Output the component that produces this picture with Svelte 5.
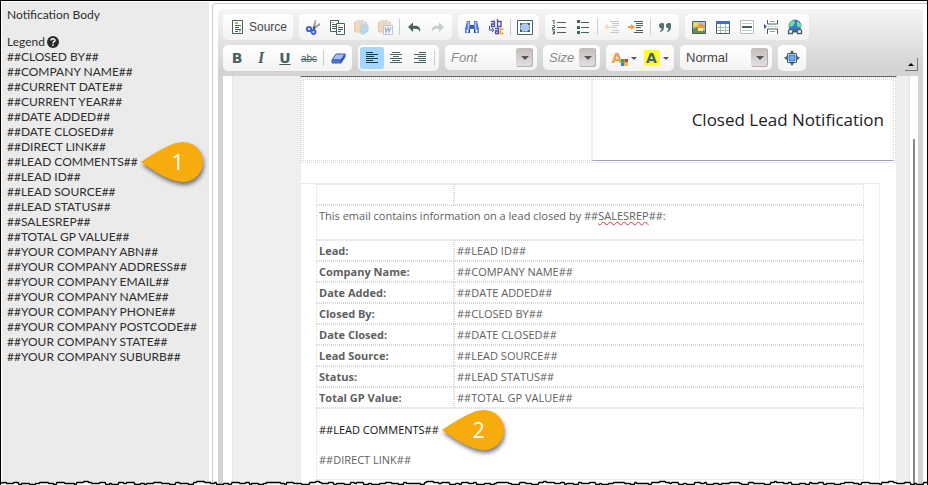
<script>
  const ink = '#466260';

  const icons = {
    source: `<path d="M3.5 1.5h10v13h-10z" fill="#fff" stroke="${ink}"/><path d="M6 4h3" stroke="#e9a13b" stroke-width="2"/><path d="M6 6.5h6M6 8.5h4M6 10.5h6M6 12.5h3" stroke="${ink}"/><path d="M10 14v-3h3z" fill="#a9b8b6"/>`,
    cut: `<path d="M10 1L8 8l2 2 1-9zM15 4L9 8l-1 3 7-5z" fill="#8c9494"/><path d="M8 8l2 2" stroke="#444c70" stroke-width="2"/><circle cx="4" cy="10" r="2.2" fill="#cfdcff" stroke="#3d63c4" stroke-width="1.8"/><circle cx="8.5" cy="13" r="2" fill="#cfdcff" stroke="#3d63c4" stroke-width="1.8"/>`,
    copy: `<path d="M1.500 1.500h8v11h-8z" fill="#fff" stroke="${ink}"/><path d="M3 3.500h2" stroke="#e9a13b"/><path d="M3 5.500h4M3 7.500h4M3 9.500h4" stroke="${ink}"/><path d="M7.500 4.500h8v11h-8z" fill="#fff" stroke="${ink}"/><path d="M9 6.500h2" stroke="#e9a13b"/><path d="M9 8.500h5M9 10.500h5M9 12.500h3" stroke="${ink}"/>`,
    paste: `<g opacity=".42"><path d="M1.500 3h12v10h-12z" fill="#eeaa5c" stroke="#c98b49"/><path d="M4 1h7v4H4z" fill="#b7b0a6"/><path d="M8 6h7v6l-4 3H8z" fill="#6ca9d7" stroke="#5896c4"/></g>`,
    word: `<g opacity=".42"><path d="M1.500 3h12v10h-12z" fill="#eeaa5c" stroke="#c98b49"/><path d="M4 1h7v4H4z" fill="#b7b0a6"/><path d="M6.500 6.500h9v9h-9z" fill="#fff" stroke="#657fb8"/><path d="M8 8l1 5 2-4 1 4 2-5" fill="none" stroke="#405fa4" stroke-width="1.500"/></g>`,
    undo: `<path d="M2 8l5-4.500V7c5-1 8 1 7 6-1-3-3-4-7-3v3z" fill="${ink}"/>`,
    redo: `<path d="M14 8L9 3.500V7C4 6 1 8 2 13c1-3 3-4 7-3v3z" fill="#c3cecc"/>`,
    find: `<path d="M3 2h3v4h4V2h3l2 8v4h-5v-4H6v4H1v-4z" fill="#4b79ce"/><path d="M2.500 10.500h2v3h-2zM11.500 10.500h2v3h-2z" fill="#e8efff"/><path d="M4.500 3v7M11.500 3v7" stroke="#a9c8ff" stroke-width="1.500"/><path d="M7 6v4M9 6v4M5.500 10v4M10.500 10v4" stroke="#323c88"/>`,
    replace: `<path d="M3 2.500h3.500v5H3.500V5h3M9.500 0v7.500h3.500v-5H9.500M7 9.500h3.500v5H7.500V12h3" fill="none" stroke="#4d4aa8" stroke-width="1.300"/><path d="M15.500 10h-3v4.500h3" fill="none" stroke="#ee9f3f" stroke-width="1.500"/><path d="M1.500 7v4h4M4 9l2 2-2 2" fill="none" stroke="#4d4aa8"/>`,
    selectall: `<path d="M.5 1.500h15v14H.5z" fill="#fff" stroke="${ink}"/><path d="M3.500 4.500h9v8h-9z" fill="#a9c7f8" stroke="#537188" stroke-dasharray="2 1"/><path d="M3 4h2v2H3zM11 4h2v2h-2zM3 11h2v2H3zM11 11h2v2h-2z" fill="${ink}"/>`,
    numbers: `<path d="M1.500 2L3 1v4M1.500 6.500h2v2h-2v2h2.500M1.500 12h2v3h-2M2 13.500h1" fill="none" stroke="${ink}"/><path d="M6 3.500h9M6 8.500h9M6 13.500h9" stroke="${ink}"/>`,
    bullets: `<path d="M2 1h3v3H2zM2 7h3v3H2zM2 12h3v3H2z" fill="${ink}"/><path d="M6 3.500h8M6 8.500h8M6 13.500h8" stroke="${ink}"/>`,
    outdent: `<g opacity=".3"><path d="M6 2.500h9M8 4.500h7M8 6.500h7M8 8.500h5M8 11.500h7M6 13.500h9" stroke="${ink}"/><path d="M0 8l4-3v2h3v2H4v2z" fill="#ee9f3f"/></g>`,
    indent: `<path d="M6 2.500h9M8 4.500h7M8 6.500h7M8 8.500h5M8 11.500h7M6 13.500h9" stroke="${ink}"/><path d="M7 8L3 5v2H0v2h3v2z" fill="#ee9f3f"/>`,
    quote: `<path d="M7 5v3c0 3-1 4-4 5v-1c1-.6 1.500-1 1.500-2.500C2.500 9 2 8 2 6.500S3 4 4.500 4 7 4 7 5zM14 5v3c0 3-1 4-4 5v-1c1-.6 1.500-1 1.500-2.500C9.500 9 9 8 9 6.500S10 4 11.500 4 14 4 14 5z" fill="#55716e"/>`,
    image: `<path d="M1.500 2.500h13v12h-13z" fill="#9ad2ee" stroke="${ink}"/><path d="M2 10l4-3 8 5v2H2z" fill="#66924a"/><circle cx="5" cy="5.500" r="2.500" fill="#f5d94c"/><path d="M6 7l4-3 4 3v2H6z" fill="#ef9739"/><path d="M7 9h5v3H7z" fill="#ffe1a5"/>`,
    table: `<path d="M1.500 2.500h13v12h-13z" fill="#fff" stroke="${ink}"/><path d="M1 2h14v3H1z" fill="#3d70c9"/><path d="M5.500 5v9M10.500 5v9M2 8.500h12M2 11.500h12" stroke="#abb8b8"/>`,
    rule: `<path d="M1.500 1.500h13v13h-13z" fill="#fff" stroke="#b9bfbe"/><path d="M3 4.500h10M3 11.500h10" stroke="#c5cac9"/><path d="M3 8h10" stroke="${ink}" stroke-width="2"/>`,
    pagebreak: `<path d="M4.500 1v4h10V1M4.500 15v-5h10v5" fill="#fff" stroke="${ink}"/><path d="M7 2.500h5M7 12.500h5" stroke="#8e9d9c"/><path d="M1 5v5l3-2.500z" fill="#4446a4"/><path d="M5 7.500h10" stroke="#b9c3c1" stroke-dasharray="2 1"/>`,
    link: `<circle cx="8" cy="7" r="6.500" fill="#3c77db"/><path d="M3 3l4-2 1 3-2 3-4 1zM10 2l4 3v4l-4-2z" fill="#6fe18b"/><path d="M1.500 14.500v-3l1-1h3l1 1h3l1-1h3l1 1v3h-4v-2h-5v2z" fill="#fff" stroke="${ink}" stroke-width="1.300"/>`,
    eraser: `<path d="M6 4h9l-4 6H2z" fill="#9dc2ff" stroke="#3d5bb0"/><path d="M2 10h9v3H2z" fill="#4b78d8" stroke="#3d5bb0"/><path d="M11 10l4-6v3l-4 6z" fill="#355ec1" stroke="#3d5bb0"/>`,
    left: `<path d="M2 2.500h7M2 4.500h12M2 6.500h8M2 8.500h12M2 10.500h7M2 12.500h12" stroke="#193940"/>`,
    center: `<path d="M4 2.500h8M2 4.500h12M5 6.500h6M2 8.500h12M4 10.500h8M2 12.500h12" stroke="${ink}"/>`,
    right: `<path d="M7 2.500h7M2 4.500h12M6 6.500h8M2 8.500h12M7 10.500h7M2 12.500h12" stroke="${ink}"/>`,
    maximize: `<path d="M3.500 3.500h9v9h-9z" fill="#fff" stroke="${ink}"/><path d="M5 5h6v6H5z" fill="#73a9f4" stroke="#3f73c9"/><path d="M8 0l2 3H6zM8 16l2-3H6zM0 8l3-2v4zM16 8l-3-2v4z" fill="${ink}"/>`
  };

  const topGroups = [
    [['cut', 'Cut'], ['copy', 'Copy'], ['paste', 'Paste'], ['word', 'Paste from Word'], null, ['undo', 'Undo'], ['redo', 'Redo']],
    [['find', 'Find'], ['replace', 'Replace'], null, ['selectall', 'Select all']],
    [['numbers', 'Numbered list'], ['bullets', 'Bulleted list'], null, ['outdent', 'Decrease indent'], ['indent', 'Increase indent'], null, ['quote', 'Block quote']],
    [['image', 'Image'], ['table', 'Table'], ['rule', 'Horizontal line'], ['pagebreak', 'Page break'], ['link', 'Link']]
  ];

  const tokens = [
    'CLOSED BY', 'COMPANY NAME', 'CURRENT DATE', 'CURRENT YEAR', 'DATE ADDED', 'DATE CLOSED', 'DIRECT LINK',
    'LEAD COMMENTS', 'LEAD ID', 'LEAD SOURCE', 'LEAD STATUS', 'SALESREP', 'TOTAL GP VALUE', 'YOUR COMPANY ABN',
    'YOUR COMPANY ADDRESS', 'YOUR COMPANY EMAIL', 'YOUR COMPANY NAME', 'YOUR COMPANY PHONE',
    'YOUR COMPANY POSTCODE', 'YOUR COMPANY STATE', 'YOUR COMPANY SUBURB'
  ];

  const fields = [
    ['Lead:', 'LEAD ID'], ['Company Name:', 'COMPANY NAME'], ['Date Added:', 'DATE ADDED'], ['Closed By:', 'CLOSED BY'],
    ['Date Closed:', 'DATE CLOSED'], ['Lead Source:', 'LEAD SOURCE'], ['Status:', 'LEAD STATUS'], ['Total GP Value:', 'TOTAL GP VALUE']
  ];

  // Ragged paper edge: short steps up and down around a base line.
  const steps = [0, 1, 0, 2, 1, 2, 1, 0, 0, 1, 2, 0, 1, 1, 2, 0, -1, 0, 1, 0, 2, 1, 2];
  let edge = 'M0 3';
  for (let x = 4, i = 0; x < 2400; i++) {
    edge += `L${x} ${2.5 + steps[i % steps.length]}`;
    x += 2 + ((i * 5) % 7);
    edge += `L${x - 1} ${2.5 + steps[i % steps.length]}`;
  }
</script>

{#snippet icon(name)}
  <svg class="icon" viewBox="0 0 16 16" aria-hidden="true">{@html icons[name]}</svg>
{/snippet}

{#snippet callout(number)}
  <span class="callout">
    <svg viewBox="0 0 64 44" aria-hidden="true">
      <path d="M0 20C14 11 30 0 42 0a20 20 0 0 1 0 40C30 40 14 30 0 20z" fill="#f8ab0c" />
    </svg>
    <b>{number}</b>
  </span>
{/snippet}

{#snippet combo(label, value, kind)}
  <label class="combo {kind}">
    <select aria-label={label}><option>{value}</option></select>
    <span class="drop"><i class="caret"></i></span>
  </label>
{/snippet}

<div class="page">
  <aside>
    <p>Notification Body</p>
    <h2>Legend <svg class="help" viewBox="0 0 12 12" aria-hidden="true"><circle cx="6" cy="6" r="6" fill="#2b2b2b" /><path d="M4 4.600C4 2.300 8 2.300 8 4.500 8 5.800 6 5.700 6 7.200" fill="none" stroke="#fff" stroke-width="1.500" /><path d="M5.200 8.300h1.600v1.500H5.200z" fill="#fff" /></svg></h2>
    <ul>
      {#each tokens as token}
        <li><span class="anchor">##{token}##{#if token === 'LEAD COMMENTS'}{@render callout(1)}{/if}</span></li>
      {/each}
    </ul>
  </aside>

  <main>
    <div class="editor">
      <div class="toolbar">
        <div class="rows">
          <div class="row">
            <div class="group"><button class="source">{@render icon('source')}Source</button></div>
            {#each topGroups as group}
              <div class="group">
                {#each group as item}
                  {#if item}
                    <button aria-label={item[1]}>{@render icon(item[0])}</button>
                  {:else}
                    <span class="sep"></span>
                  {/if}
                {/each}
              </div>
            {/each}
          </div>
          <div class="row">
            <div class="group">
              <button class="letter bold">B</button>
              <button class="letter italic">I</button>
              <button class="letter under">U</button>
              <button class="strike">abc</button>
              <span class="sep"></span>
              <button aria-label="Remove format">{@render icon('eraser')}</button>
            </div>
            <div class="group">
              <button class="on" aria-label="Align left">{@render icon('left')}</button>
              <button aria-label="Center">{@render icon('center')}</button>
              <button aria-label="Align right">{@render icon('right')}</button>
              <span class="sep"></span>
            </div>
            {@render combo('Font family', 'Font', 'hint')}
            {@render combo('Font size', 'Size', 'hint small')}
            <div class="group">
              <button class="color" aria-label="Text color"><span class="fore">A<svg class="dots" viewBox="0 0 6 6" aria-hidden="true"><path d="M0 0h3v3H0z" fill="#2fae3c" /><path d="M3 0h3v3H3z" fill="#e43b2f" /><path d="M0 3h3v3H0z" fill="#3c79ed" /><path d="M3 3h3v3H3z" fill="#f2c52b" /></svg></span><i class="caret"></i></button>
              <button class="color" aria-label="Background color"><span class="back">A</span><i class="caret"></i></button>
            </div>
            {@render combo('Paragraph format', 'Normal', '')}
            <div class="group"><button aria-label="Maximize">{@render icon('maximize')}</button></div>
          </div>
        </div>
        <button class="collapse" aria-label="Collapse toolbar"></button>
      </div>

      <div class="canvas">
        <div class="backdrop">
          <div class="sheet">
            <div class="banner">
              <div class="logo"></div>
              <h1>Closed Lead Notification</h1>
            </div>
            <div class="frame">
              <table>
                <tbody>
                  <tr><td class="name"></td><td></td></tr>
                  <tr><td class="intro" colspan="2">This email contains information on a lead closed by ##<u>SALESREP</u>##:</td></tr>
                  {#each fields as [name, token]}
                    <tr><th scope="row">{name}</th><td>##{token}##</td></tr>
                  {/each}
                  <tr>
                    <td class="closing" colspan="2">
                      <p class="dark"><span class="anchor">##LEAD COMMENTS##{@render callout(2)}</span></p>
                      <p>##DIRECT LINK##</p>
                    </td>
                  </tr>
                </tbody>
              </table>
            </div>
          </div>
        </div>
        <div class="thumb"></div>
      </div>
    </div>
  </main>

  <svg class="torn" aria-hidden="true">
    <path d="{edge}V8H0z" fill="#fff" />
    <path d={edge} fill="none" stroke="#000" stroke-width="1.500" />
  </svg>
</div>

<style>
  :global(body) { margin: 0; background: #fff; }
  * { box-sizing: border-box; }
  p, h1, h2, ul { margin: 0; padding: 0; font-weight: normal; }

  .page {
    position: relative;
    display: flex;
    min-height: 100vh;
    padding: 1px 0 0 1px;
    border: 1px solid #000;
    border-bottom: 0;
    overflow: hidden;
    font-family: "Liberation Sans", sans-serif;
  }

  aside {
    flex: none;
    width: 207px;
    padding: 5px;
    background: #ebebeb;
    color: #2e2e2e;
    font: 12px/15px Lato, sans-serif;
  }
  aside h2 { display: flex; align-items: center; gap: 2px; margin-top: 12px; font-size: 12px; }
  .help { width: 12px; height: 12px; }
  ul { list-style: none; }
  .anchor { position: relative; white-space: nowrap; }

  main {
    flex: 1;
    min-width: 0;
    margin: 1px 0 0 3px;
    padding: 5px 4px 0 5px;
    border: solid #ccc;
    border-width: 1px 0 0 1px;
    border-radius: 4px 0 0 0;
  }
  .editor { display: flex; flex-direction: column; height: 100%; background: #d3d3d3; border-radius: 5px 5px 0 0; }

  .toolbar {
    display: flex;
    justify-content: space-between;
    align-items: flex-end;
    padding: 5px;
    border-radius: 5px 5px 0 0;
    background: linear-gradient(#f5f5f5, #d3d3d3 60px);
  }
  .rows { display: grid; gap: 5px; }
  .row { display: flex; gap: 6px; }
  .group, .combo { display: flex; align-items: center; height: 26px; border-radius: 5px; background: linear-gradient(#fff, #f3f3f3); }
  .group { padding: 0 2px; }
  button {
    display: flex;
    align-items: center;
    justify-content: center;
    width: 24px;
    height: 22px;
    padding: 0;
    border: 0;
    border-radius: 3px;
    background: none;
    color: #466260;
    font: 12px "Liberation Sans", sans-serif;
  }
  button.on { background: #a3d7ff; }
  .icon { width: 16px; height: 16px; }
  button.source { width: 66px; gap: 4px; color: #474747; }
  .sep { width: 1px; height: 16px; margin: 0 2px; background: #ccc; }
  .letter { font: bold 14px "DejaVu Sans", sans-serif; }
  .italic { font: italic bold 16px "Liberation Serif", serif; }
  .under { text-decoration: underline; }
  .strike { font-size: 10px; text-decoration: line-through; }

  .combo { position: relative; width: 92px; height: 25px; }
  .combo.small { width: 57px; }
  select {
    appearance: none;
    width: 100%;
    height: 25px;
    padding: 0 20px 0 6px;
    border: 0;
    background: none;
    color: #474747;
    font: 13px "Liberation Sans", sans-serif;
  }
  .hint select { color: #8a8a8a; font-style: italic; }
  .drop {
    position: absolute;
    right: 4px;
    top: 3px;
    display: grid;
    place-items: center;
    width: 17px;
    height: 19px;
    border-radius: 3px;
    background: linear-gradient(#c4bbbb, #e6e0e0);
    box-shadow: inset -1px -1px #b3adad;
    pointer-events: none;
  }
  .caret { border: solid transparent; border-width: 3px 3px 0; border-top-color: #555; }
  .drop .caret { border-width: 4px 4px 0; }
  .color { gap: 3px; width: 32px; }
  .fore, .back { position: relative; width: 16px; height: 16px; font: bold 14px/16px "DejaVu Sans", sans-serif; }
  .fore { color: #efa04b; text-align: left; }
  .back { background: #fdfb3b; }
  .dots { position: absolute; right: 0; bottom: 0; width: 7px; height: 7px; }
  .collapse { width: 13px; height: 13px; border: solid #777; border-width: 0 1px 1px 0; border-radius: 0; }
  .collapse::before { content: ""; border: solid transparent; border-width: 0 3px 3px; border-bottom-color: #000; }

  .canvas { flex: 1; display: flex; margin: 0 5px; background: #fff; }
  .backdrop { flex: 1; padding: 0 12px 0 67px; border: dotted #d9d9d9; border-width: 0 1px; margin-left: 9px; background: #efefef; }
  .thumb { width: 2px; margin: 63px 3px 0; background: #888; }
  .sheet {
    height: 100%;
    border: 1px dotted #d9d9d9;
    border-top: 1px solid #666;
    background: #fff;
    color: #606060;
    font: 11px/15px "Open Sans", sans-serif;
  }
  .banner { display: grid; grid-template-columns: 291fr 305fr; padding: 1px; border: 1px dotted #d9d9d9; }
  .logo, h1 { height: 82px; border: 1px dotted #d9d9d9; }
  h1 {
    display: flex;
    align-items: center;
    justify-content: flex-end;
    padding-right: 9px;
    border-bottom: 1px solid #9ba4b8;
    color: #222;
    font-size: 17px;
    line-height: 22px;
  }
  .frame { margin: 20px 16px 0 0; padding: 0 15px; border: dotted #d9d9d9; border-width: 1px 1px 0 0; }
  table { width: 100%; border-spacing: 0; }
  td, th { height: 21px; padding: 0 2px; border: 1px dotted #d9d9d9; text-align: left; font-size: 11px; line-height: 15px; }
  .name { width: 138px; }
  .intro { height: 35px; padding-top: 2px; vertical-align: top; }
  .closing { height: 72px; padding-top: 13px; vertical-align: top; }
  .closing p + p { margin-top: 15px; }
  .dark { color: #111; }
  u { text-decoration: underline wavy #d33 1px; }

  .callout { position: absolute; left: 100%; top: 50%; width: 64px; height: 44px; margin: -20px 0 0 3px; color: #fff; }
  .callout svg { position: absolute; inset: 0; overflow: visible; filter: drop-shadow(1px 3px 2px #0008); }
  .callout b { position: absolute; inset: 0 16px 4px 26px; display: grid; place-items: center; font: 21px/28px "Open Sans", sans-serif; }
  .torn { position: absolute; left: 0; bottom: -1px; width: 100%; height: 6px; }
</style>
